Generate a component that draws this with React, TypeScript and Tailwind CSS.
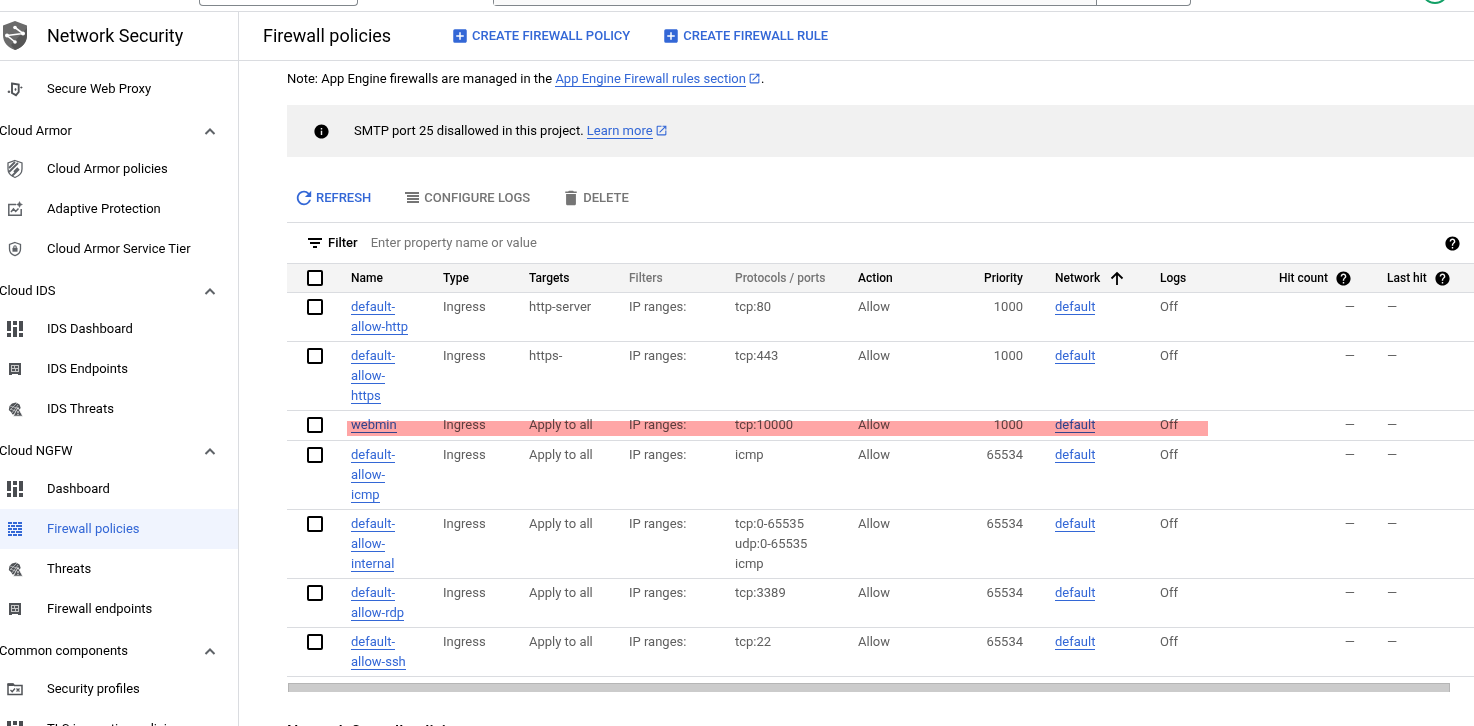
import type { ReactNode } from 'react';
import { MdAddBox, MdDelete, MdHelp, MdInfo, MdOpenInNew, MdRefresh } from 'react-icons/md';

const NetworkSecurityLogo = () => (
  <svg className="h-8 w-7 shrink-0" viewBox="0 0 28 32">
    <path d="M14 1 26 5.500V15c0 7.500-5 12.500-12 15C7 27.500 2 22.500 2 15V5.500z" fill="#6b6b6b" />
    <path d="M26 8v7c0 7.500-5 12.500-12 15l-4-5z" fill="#565656" />
    <path d="M14 7.500 22 13.500 6 15.500l8 6.500" fill="none" stroke="#fff" strokeWidth="1.600" />
    <g fill="#fff">
      <circle cx="14" cy="7.500" r="1.800" />
      <circle cx="22" cy="13.500" r="2" />
      <circle cx="6" cy="15.500" r="2" />
      <circle cx="14" cy="22" r="1.800" />
    </g>
  </svg>
);

const ProxyIcon = () => (
  <svg className="h-4 w-4" viewBox="0 0 16 16" fill="none" stroke="#505357">
    <path d="m5 2.500 6.700 1v7.500L9 14.200 5 12z" strokeWidth="1.900" />
    <path d="M1.200 10h1.500v1.500H1.200zM13.800 6h1.200v1h-1.200zM8 7.700h1v1.500H8z" fill="#505357" strokeWidth="0.800" />
  </svg>
);

const ArmorIcon = () => (
  <svg className="h-5 w-5" viewBox="0 0 20 20" fill="none" stroke="#5f6368">
    <path d="M10 1.500 17 4v6c0 4-3 7-7 8.500C6 17 3 14 3 10V4z" strokeWidth="1.300" />
    <path d="m4 9 6-6M4 13l9-9M9 13l4-4M7 17l7-7" strokeWidth="1.900" />
  </svg>
);

const AdaptiveIcon = () => (
  <svg className="h-4 w-4" viewBox="0 0 16 16" fill="none" stroke="#5f6368" strokeWidth="1.500">
    <path d="M9 3.500H1.800v10.700h12.400V8M4 11l2.500-3 2.200 2.500 2.800-3" />
    <path d="m12.500.5 1 2 2 1-2 1-1 2-1-2-2-1 2-1z" fill="#5f6368" strokeWidth="0.400" />
  </svg>
);

const TierIcon = () => (
  <svg className="h-4 w-4" viewBox="0 0 16 16" fill="none" stroke="#5f6368">
    <path d="M8 1.500 13.500 3.500V8c0 3.200-2.200 5.700-5.500 6.700C4.700 13.700 2.500 11.200 2.500 8V3.500z" strokeWidth="1.300" />
    <path d="M5.700 7h4.600v3.500H5.700z" fill="#5f6368" strokeWidth="0.400" />
    <path d="M6.800 7V6a1.200 1.200 0 0 1 2.400 0v1" strokeWidth="1.100" />
  </svg>
);

const DashboardIcon = () => (
  <svg className="h-4 w-4" viewBox="0 0 16 16" fill="#4a4d51">
    <path d="M0 0h4v10H0zM0 12h4v4H0zM6 0h4v4H6zM6 6h4v10H6zM12 0h4v10h-4zM12 12h4v4h-4z" />
  </svg>
);

const EndpointIcon = () => (
  <svg className="h-4 w-4" viewBox="0 0 16 16">
    <path d="M3 3h10v9H3z" fill="#c8c8c8" stroke="#505357" strokeWidth="2" />
    <path d="M2 13h3v1H2zM11 13h3v1h-3z" fill="#505357" />
    <path d="M5 5h2v2H5zM8 5h3v2H8zM5 8h3v2H5zM9 8h2v2H9z" fill="#505357" />
  </svg>
);

const ThreatIcon = () => (
  <svg className="h-4 w-4" viewBox="0 0 16 16">
    <path d="M5 2.500 9 1.500l3.500 2 1.200 3.500-5 6-3.200.5L4 11 1.800 9 2.500 5z" fill="#505357" />
    <path d="m3 5 8.500 2.500M3 9l7-7M5 12l6-8M3.500 8l6 2.500" stroke="#fff" strokeWidth="0.500" />
    <path d="m11 6.500 4.800 8.700H6.200z" fill="#505357" stroke="#fff" strokeWidth="0.800" />
    <path d="M10.500 10h1v2.200h-1zM10.500 13h1v1h-1z" fill="#fff" />
  </svg>
);

const FirewallIcon = () => (
  <svg className="h-4 w-4" viewBox="0 0 16 16" stroke="#3367d6" strokeWidth="2">
    <path d="M1 2h4M6 2h4M11 2h4M1 5h2M4 5h4M9 5h6M1 8h4M6 8h4M11 8h4M1 11h2M4 11h4M9 11h6M1 14h4M6 14h4M11 14h4" />
  </svg>
);

const ProfileIcon = () => (
  <svg className="h-4 w-4" viewBox="0 0 16 16" fill="none" stroke="#505357">
    <path d="M1 3h5l1.500 1.500H15v9H1z" strokeWidth="1.500" />
    <path d="M1 3h5.500v1.500H1z" fill="#505357" />
    <path d="m3.500 9 1.700 1.700L8 7.500M9.500 7.500l3 3M12.500 7.500l-3 3" strokeWidth="1.300" />
  </svg>
);

const ConfigureIcon = () => (
  <svg className="h-[18px] w-[18px]" viewBox="0 0 18 18" stroke="currentColor" strokeWidth="2">
    <path d="M2 4h14M4 7h12M4 10h12M4 13h12" />
  </svg>
);

const FilterIcon = () => (
  <svg className="h-[18px] w-[18px]" viewBox="0 0 18 18" stroke="currentColor" strokeWidth="2">
    <path d="M2 5h14M4 9h10M7 13h4" />
  </svg>
);

const ChevronIcon = () => (
  <svg className="h-[18px] w-[18px]" viewBox="0 0 18 18" fill="none" stroke="#5f6368" strokeWidth="2">
    <path d="m4.500 12 4.500-4.500 4.500 4.500" />
  </svg>
);

const SortIcon = () => (
  <svg className="h-[18px] w-[18px]" viewBox="0 0 18 18" fill="none" stroke="currentColor" strokeWidth="1.800">
    <path d="M9 16V4M3.500 9.500 9 4l5.500 5.500" />
  </svg>
);

const sections = [
  { items: [{ label: 'Secure Web Proxy', icon: <ProxyIcon /> }] },
  {
    title: 'Cloud Armor',
    items: [
      { label: 'Cloud Armor policies', icon: <ArmorIcon /> },
      { label: 'Adaptive Protection', icon: <AdaptiveIcon /> },
      { label: 'Cloud Armor Service Tier', icon: <TierIcon /> },
    ],
  },
  {
    title: 'Cloud IDS',
    items: [
      { label: 'IDS Dashboard', icon: <DashboardIcon /> },
      { label: 'IDS Endpoints', icon: <EndpointIcon /> },
      { label: 'IDS Threats', icon: <ThreatIcon /> },
    ],
  },
  {
    title: 'Cloud NGFW',
    items: [
      { label: 'Dashboard', icon: <DashboardIcon /> },
      { label: 'Firewall policies', icon: <FirewallIcon />, active: true },
      { label: 'Threats', icon: <ThreatIcon /> },
      { label: 'Firewall endpoints', icon: <EndpointIcon /> },
    ],
  },
  {
    title: 'Common components',
    items: [
      { label: 'Security profiles', icon: <ProfileIcon /> },
      { label: 'TLS inspection policies', icon: <DashboardIcon /> },
    ],
  },
] as {
  title?: string;
  items: { label: string; icon: ReactNode; active?: boolean }[];
}[];

const rules = [
  { name: 'default-allow-http', targets: 'http-server', ports: ['tcp:80'], priority: 1000 },
  { name: 'default-allow-https', targets: 'https-', ports: ['tcp:443'], priority: 1000 },
  { name: 'webmin', targets: 'Apply to all', ports: ['tcp:10000'], priority: 1000, marked: true },
  { name: 'default-allow-icmp', targets: 'Apply to all', ports: ['icmp'], priority: 65534 },
  {
    name: 'default-allow-internal',
    targets: 'Apply to all',
    ports: ['tcp:0-65535', 'udp:0-65535', 'icmp'],
    priority: 65534,
  },
  { name: 'default-allow-rdp', targets: 'Apply to all', ports: ['tcp:3389'], priority: 65534 },
  { name: 'default-allow-ssh', targets: 'Apply to all', ports: ['tcp:22'], priority: 65534 },
];

const TextLink = ({ children }: { children: ReactNode }) => (
  <a href="#" className="border-b border-[#3367d6] text-[#3367d6]">
    {children}
  </a>
);

const ExternalIcon = () => (
  <MdOpenInNew className="ml-0.5 inline-block h-[13px] w-[13px] align-[-2px] text-[#3367d6]" />
);

const Checkbox = ({ label }: { label: string }) => (
  <input
    type="checkbox"
    aria-label={label}
    className="block h-4 w-4 appearance-none rounded-xs border-2 border-black bg-white"
  />
);

const Sidebar = () => (
  <nav className="w-[239px] shrink-0 overflow-hidden border-r border-[#dadce0]">
    <div className="flex h-[49px] items-center gap-[18px] border-b border-[#dadce0] pl-px">
      <NetworkSecurityLogo />
      <h2 className="text-lg">Network Security</h2>
    </div>
    <div className="pt-2">
      {sections.map((section, i) => (
        <div key={i}>
          {section.title && (
            <button className="-ml-px flex h-10 w-full items-center justify-between pt-1 pr-[18px]">
              {section.title}
              <ChevronIcon />
            </button>
          )}
          {section.items.map((item) => (
            <a
              key={item.label}
              href="#"
              className={
                item.active
                  ? 'flex h-10 items-center bg-[#f0f4fe] text-[#3367d6]'
                  : 'flex h-10 items-center'
              }
            >
              <span className="mr-[17px] flex w-[30px] justify-center">{item.icon}</span>
              {item.label}
            </a>
          ))}
        </div>
      ))}
    </div>
  </nav>
);

const RulesTable = () => (
  <table className="w-full table-fixed text-left text-[13px] leading-5">
    <colgroup>
      <col className="w-16" />
      <col className="w-[92px]" />
      <col className="w-[86px]" />
      <col className="w-[100px]" />
      <col className="w-[106px]" />
      <col className="w-[123px]" />
      <col className="w-[98px]" />
      <col className="w-[99px]" />
      <col className="w-[105px]" />
      <col className="w-[119px]" />
      <col className="w-[108px]" />
      <col />
    </colgroup>
    <thead>
      <tr className="h-[29px] border-y border-[#dadce0] bg-[#f4f4f4] text-xs whitespace-nowrap [&>th]:font-medium">
        <th className="pl-5">
          <Checkbox label="Select all rules" />
        </th>
        <th>Name</th>
        <th>Type</th>
        <th>Targets</th>
        <th className="text-[#757575]">Filters</th>
        <th className="text-[#757575]">Protocols / ports</th>
        <th>Action</th>
        <th className="pr-8 text-right">Priority</th>
        <th>
          <span className="flex items-center gap-2">
            Network <SortIcon />
          </span>
        </th>
        <th>Logs</th>
        <th>
          <span className="flex items-center gap-[7px]">
            Hit count <MdHelp className="h-[17px] w-[17px]" />
          </span>
        </th>
        <th>
          <span className="flex items-center gap-[7px]">
            Last hit <MdHelp className="h-[17px] w-[17px]" />
          </span>
        </th>
      </tr>
    </thead>
    <tbody className="text-[#5f5f5f]">
      {rules.map((rule) => (
        <tr
          key={rule.name}
          className="h-[30px] border-b border-[#dadce0] [&>td]:py-1 [&>td]:align-top"
        >
          <td className="pl-5">
            <div className="pt-0.5">
              <Checkbox label={rule.name} />
            </div>
          </td>
          <td className="relative pr-8">
            <TextLink>{rule.name}</TextLink>
            {rule.marked && (
              <span className="pointer-events-none absolute top-[10px] -left-1 h-[15px] w-[861px] bg-[#ffa6a6] mix-blend-multiply" />
            )}
          </td>
          <td>Ingress</td>
          <td>{rule.targets}</td>
          <td>IP ranges:</td>
          <td>
            {rule.ports.map((port) => (
              <div key={port}>{port}</div>
            ))}
          </td>
          <td>Allow</td>
          <td className="pr-8 text-right">{rule.priority}</td>
          <td>
            <TextLink>default</TextLink>
          </td>
          <td>Off</td>
          <td className="pr-8 text-right">—</td>
          <td>—</td>
        </tr>
      ))}
    </tbody>
  </table>
);

const App = () => {
  return (
    <div className="flex h-screen flex-col overflow-hidden bg-white font-[Roboto,sans-serif] text-[13px] leading-5 text-black">
      <header className="flex h-3 shrink-0 items-start border-b border-[#dadce0]">
        <div className="ml-[199px] h-1.5 w-[159px] rounded-b border border-t-0 border-[#80868b]" />
        <div className="ml-[135px] flex h-1.5 w-[698px] rounded-b border border-t-0 border-[#80868b]">
          <div className="flex-1 border-r border-[#80868b] bg-[#fafafa]" />
          <div className="w-[93px]" />
        </div>
        <div className="mr-[25px] ml-auto flex h-1 w-7 items-end overflow-hidden">
          <div className="h-7 w-7 shrink-0 rounded-full border-2 border-[#12a066]" />
        </div>
      </header>

      <div className="flex min-h-0 flex-1">
        <Sidebar />
        <main className="min-w-0 flex-1">
          <div className="flex h-[49px] items-center border-b border-[#dadce0] pl-6">
            <h1 className="text-lg">Firewall policies</h1>
            <div className="ml-[60px] flex gap-8 font-medium text-[#3367d6]">
              <button className="flex items-center gap-[3px]">
                <MdAddBox className="h-[18px] w-[18px]" />
                CREATE FIREWALL POLICY
              </button>
              <button className="flex items-center gap-[3px]">
                <MdAddBox className="h-[18px] w-[18px]" />
                CREATE FIREWALL RULE
              </button>
            </div>
          </div>

          <div className="pl-12">
            <p className="pt-2">
              Note: App Engine firewalls are managed in the{' '}
              <TextLink>App Engine Firewall rules section</TextLink>
              <ExternalIcon />.
            </p>

            <div className="mt-4 flex h-[52px] items-center bg-[#f1f1f1] pl-[26px]">
              <MdInfo className="mr-6 h-[17px] w-[17px]" />
              <p>
                SMTP port 25 disallowed in this project. <TextLink>Learn more</TextLink>
                <ExternalIcon />
              </p>
            </div>

            <div className="mt-[31px] flex gap-8 pl-2 font-medium text-[#757575]">
              <button className="flex items-center gap-[3px] text-[#3367d6]">
                <MdRefresh className="h-[18px] w-[18px]" viewBox="2 2 20 20" />
                REFRESH
              </button>
              <button className="flex items-center gap-[3px]">
                <ConfigureIcon />
                CONFIGURE LOGS
              </button>
              <button className="flex items-center gap-[3px]">
                <MdDelete className="h-[18px] w-[18px]" viewBox="1 1 22 22" />
                DELETE
              </button>
            </div>

            <div className="mt-[14px] flex h-[41px] items-center border-t border-[#dadce0] pr-[13px] pl-[19px]">
              <FilterIcon />
              <label htmlFor="filter" className="mr-[13px] ml-1 font-medium">
                Filter
              </label>
              <input
                id="filter"
                placeholder="Enter property name or value"
                className="flex-1 outline-none placeholder:text-[#757575]"
              />
              <MdHelp className="h-[17px] w-[17px]" />
            </div>

            <RulesTable />

            <div className="mt-1.5 mr-6 ml-px h-[9px] border border-b-0 border-[#b5b5b5] bg-[#cbcbcb]" />
            <h2 className="mt-7 text-base font-medium">Network firewall policies</h2>
          </div>
        </main>
      </div>
    </div>
  );
};

export default App;
